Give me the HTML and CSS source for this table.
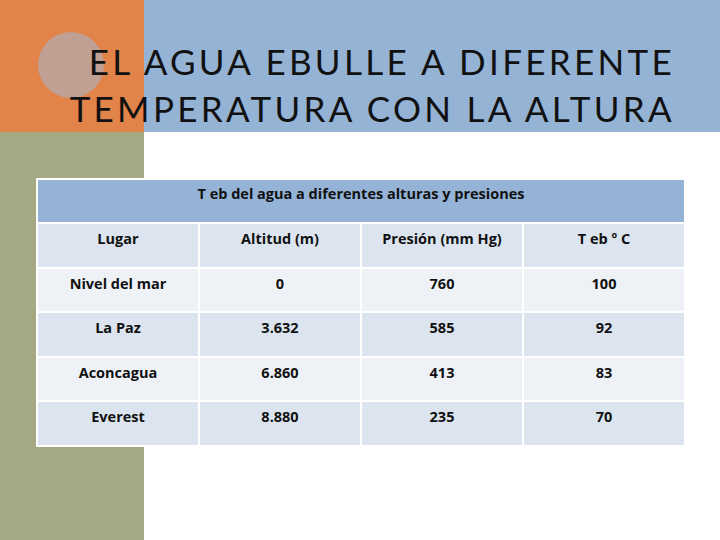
FILE: index.html
```html
<!DOCTYPE html>
<html lang="es">
<head>
<meta charset="utf-8">
<link rel="stylesheet" href="styles.css">
</head>
<body>
<div class="slide">
  <div class="block orange"></div>
  <div class="block blue"></div>
  <div class="block olive"></div>
  <div class="circle"></div>
  <h1 class="title">EL AGUA EBULLE A DIFERENTE<br>TEMPERATURA CON LA ALTURA</h1>
  <div class="table-wrap">
    <table class="data">
      <tr><td class="caption" colspan="4">T eb del agua a diferentes alturas y presiones</td></tr>
      <tr class="dark"><td>Lugar</td><td>Altitud (m)</td><td>Presión (mm Hg)</td><td>T eb º C</td></tr>
      <tr class="light"><td>Nivel del mar</td><td>0</td><td>760</td><td>100</td></tr>
      <tr class="dark"><td>La Paz</td><td>3.632</td><td>585</td><td>92</td></tr>
      <tr class="light"><td>Aconcagua</td><td>6.860</td><td>413</td><td>83</td></tr>
      <tr class="dark"><td>Everest</td><td>8.880</td><td>235</td><td>70</td></tr>
    </table>
  </div>
</div>
</body>
</html>
```
FILE: styles.css
```css
html, body { margin: 0; padding: 0; background: #fff; }
.slide {
  width: 720px;
  height: 540px;
  display: grid;
  grid-template-columns: 144px 1fr;
  grid-template-rows: 132px 1fr;
  position: relative;
  overflow: hidden;
}
.orange { grid-column: 1; grid-row: 1; background: #E2834A; }
.blue { grid-column: 2; grid-row: 1; background: #95B3D5; }
.olive { grid-column: 1; grid-row: 2; background: #A5A983; }
.circle {
  position: absolute;
  left: 38px;
  top: 32px;
  width: 66px;
  height: 66px;
  border-radius: 50%;
  background: #C0A092;
}
.title {
  grid-column: 1 / 3;
  grid-row: 1;
  margin: 0;
  padding: 38px 45px 0 0;
  text-align: right;
  font-family: "Lato", sans-serif;
  font-weight: 400;
  font-size: 35px;
  line-height: 47px;
  letter-spacing: 3.3px;
  color: #111;
  position: relative;
}
.table-wrap {
  grid-column: 1 / 3;
  grid-row: 2;
  padding: 46px 0 0 36px;
  position: relative;
}
.data {
  border-collapse: separate;
  border-spacing: 2px;
  background: #fff;
  width: 650px;
  table-layout: fixed;
  font-family: "Open Sans", sans-serif;
  font-weight: 700;
  font-size: 14.5px;
  color: #111;
}
.data td {
  height: 42.5px;
  padding: 5px 0 0;
  vertical-align: top;
  text-align: center;
  line-height: 20px;
  box-sizing: border-box;
}
.data td.caption {
  background: #95B3D7;
  height: 42px;
  padding-top: 4px;
}
.dark td { background: #DCE5EF; }
.light td { background: #EEF2F7; }
```
